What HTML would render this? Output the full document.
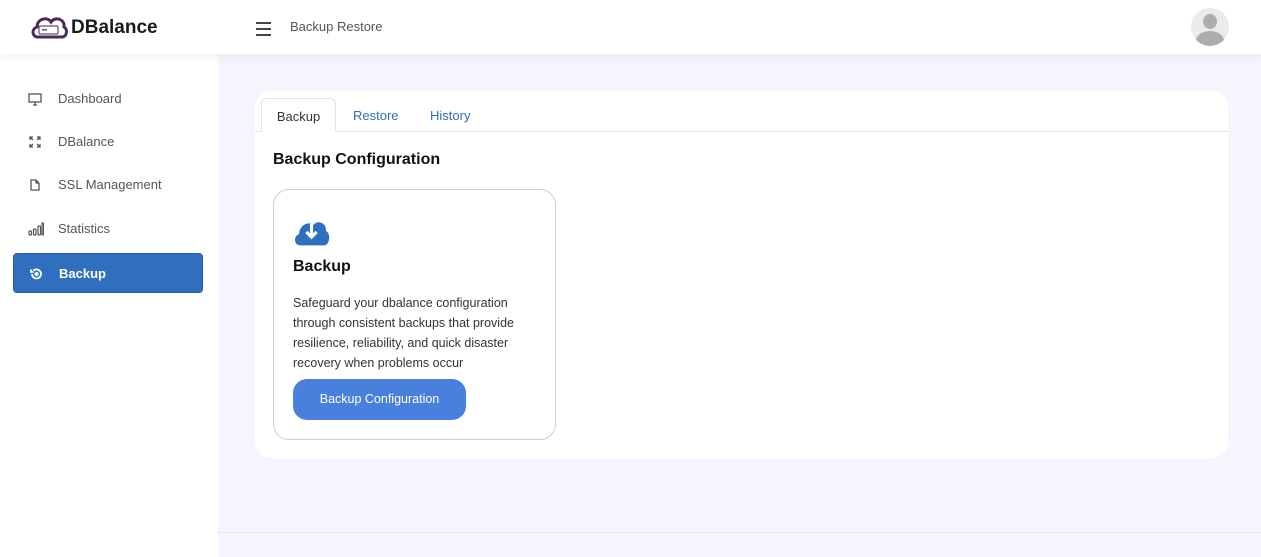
<!DOCTYPE html>
<html><head><meta charset="utf-8"><style>
*{box-sizing:border-box;margin:0;padding:0}
body{width:1261px;height:557px;overflow:hidden;background:#f5f6fd;font-family:"Liberation Sans",sans-serif;position:relative}
.header{position:absolute;left:0;top:0;width:1261px;height:54px;background:#fff;box-shadow:0 3px 10px rgba(0,0,0,.06);z-index:2}
.logo{position:absolute;left:29px;top:13px}
.brand{position:absolute;left:71px;top:17px;font-size:19px;font-weight:bold;color:#1a1a1a}
.ham{position:absolute;left:256px;top:22px;width:15px}
.ham i{display:block;height:2px;background:#444;margin-bottom:4px}
.crumb{position:absolute;left:290px;top:19px;font-size:13px;color:#555}
.avatar{position:absolute;left:1191px;top:8px;width:38px;height:38px;border-radius:50%;background:#ebebeb;overflow:hidden}
.sidebar{position:absolute;left:0;top:54px;width:218px;height:503px;background:#fff}
.item{position:absolute;left:13px;width:190px;height:40px;font-size:13px;color:#555;border-radius:4px}
.item span{position:absolute;left:45px;top:12px}
.item svg{position:absolute;left:15px;top:13px}
.item.active{background:#2f6fbd;color:#fff;font-weight:bold;border:1px solid #2a5fa3}
.panel{position:absolute;left:255px;top:91px;width:973px;height:367px;background:#fff;border-radius:16px}
.tabline{position:absolute;left:0;top:40px;width:973px;height:1px;background:#e3e3e3}
.tab{position:absolute;top:7px;height:34px;font-size:13px;color:#2f6fbd;padding-top:10px}
.tab.act{left:6px;width:75px;border:1px solid #e3e3e3;border-bottom:1px solid #fff;border-radius:6px 6px 0 0;background:#fff;color:#333;text-align:center}
h2{position:absolute;left:18px;top:60px;font-size:16px;font-weight:bold;color:#111}
.card{position:absolute;left:18px;top:98px;width:283px;height:251px;border:1px solid #cfcfcf;border-radius:16px}
.card h3{position:absolute;left:19px;top:68px;font-size:16px;font-weight:bold;color:#111}
.card p{position:absolute;left:19px;top:103px;width:250px;font-size:12.5px;line-height:20px;color:#333}
.btn{position:absolute;left:19px;top:189px;width:173px;height:41px;background:#4a80dd;border-radius:14px;color:#fff;font-size:12.5px;text-align:center;line-height:41px}
.footer{position:absolute;left:218px;top:532px;width:1043px;height:1px;background:#e4e5ee}
</style></head><body>
<div class="header">
 <svg class="logo" width="40" height="30" viewBox="0 0 40 30"><path d="M9 24 C3 24 2 16 8 14 C8 6 18 3 22 9 C26 3 36 6 35 14 C39 16 38 24 33 24 Z" fill="none" stroke="#4b2a57" stroke-width="3"/><rect x="10" y="13" width="19" height="8" rx="1" fill="#fff" stroke="#6a4a75" stroke-width="1.2"/><rect x="13" y="16" width="5" height="1.5" fill="#6a4a75"/></svg>
 <div class="brand">DBalance</div>
 <div class="ham"><i></i><i></i><i></i></div>
 <div class="crumb">Backup Restore</div>
 <div class="avatar"><div style="position:absolute;left:12px;top:6px;width:14px;height:15px;border-radius:50%;background:#adadad"></div><div style="position:absolute;left:5px;top:23px;width:28px;height:20px;border-radius:50%;background:#adadad"></div></div>
</div>
<div class="sidebar">
 <div class="item" style="top:25px"><svg width="14" height="14" viewBox="0 0 14 14" fill="none" stroke="#555" stroke-width="1.3"><rect x="1" y="2" width="12" height="8"/><path d="M7 10v3M5 13h4"/></svg><span>Dashboard</span></div>
 <div class="item" style="top:68px"><svg width="14" height="14" viewBox="0 0 14 14" fill="none" stroke="#555" stroke-width="1.3"><path d="M2 5V2h3M9 2h3v3M12 9v3H9M5 12H2V9M2 2l3 3M12 2L9 5M12 12L9 9M2 12l3-3"/></svg><span>DBalance</span></div>
 <div class="item" style="top:111px"><svg width="14" height="14" viewBox="0 0 14 14" fill="none" stroke="#555" stroke-width="1.3"><path d="M3 2h5l3 3v7H3z M8 2v3h3"/></svg><span>SSL Management</span></div>
 <div class="item" style="top:155px"><svg width="16" height="14" viewBox="0 0 16 14" fill="none" stroke="#555" stroke-width="1.2"><rect x="1" y="9" width="2.5" height="4" rx="1"/><rect x="5.5" y="7" width="2.5" height="6" rx="1"/><rect x="10" y="4" width="2.5" height="9" rx="1"/><rect x="14" y="1" width="1.5" height="12" rx=".7"/></svg><span>Statistics</span></div>
 <div class="item active" style="top:199px"><svg width="14" height="14" viewBox="0 0 14 14" fill="none" stroke="#fff" stroke-width="1.8"><path d="M3 7a4.5 4.5 0 1 0 1.3-3.2M2 2.5v2.5h2.5"/><circle cx="7.5" cy="7" r="1.2" fill="#fff"/></svg><span>Backup</span></div>
</div>
<div class="panel">
 <div class="tabline"></div>
 <div class="tab act">Backup</div>
 <div class="tab" style="left:98px">Restore</div>
 <div class="tab" style="left:175px">History</div>
 <h2>Backup Configuration</h2>
 <div class="card">
  <svg style="position:absolute;left:19px;top:27px" width="37" height="30" viewBox="0 0 36 28"><path d="M7 27C1 27 0 18 6 16C6 8 14 3 20 7C24 2 33 5 32 13C37 15 36 27 30 27Z" fill="#2f6fbd"/><path d="M18 6v12M13 14l5 5 5-5" stroke="#fff" stroke-width="3" fill="none"/></svg>
  <h3>Backup</h3>
  <p>Safeguard your dbalance configuration through consistent backups that provide resilience, reliability, and quick disaster recovery when problems occur</p>
  <div class="btn">Backup Configuration</div>
 </div>
</div>
<div class="footer"></div>
</body></html>
